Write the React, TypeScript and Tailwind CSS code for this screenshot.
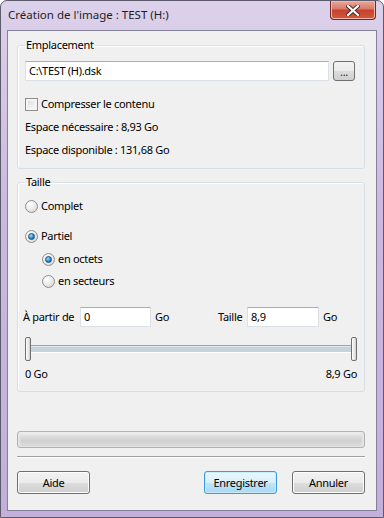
import React from "react";

const font = { fontFamily: '"Noto Sans", "Segoe UI", Tahoma, sans-serif' };

function Radio({ checked, label }: { checked?: boolean; label: string }) {
  return (
    <div className="flex items-center h-[16px]">
      <span className="relative flex items-center justify-center w-[13px] h-[13px] rounded-full border border-[#8e8f8f] bg-[radial-gradient(circle_at_35%_30%,#ffffff_0%,#e6e6e6_60%,#c9c9c9_100%)]">
        {checked && (
          <span className="w-[7px] h-[7px] rounded-full border border-[#1c4c7a] bg-[radial-gradient(circle_at_35%_30%,#9ee3ff_0%,#2a8fd4_55%,#0f4f8a_100%)]" />
        )}
      </span>
      <span className="ml-[3px] text-[#000]">{label}</span>
    </div>
  );
}

function Button({ label, primary }: { label: string; primary?: boolean }) {
  return (
    <button
      className={
        "w-[73px] h-[23px] rounded-[3px] border text-[11px] leading-none " +
        (primary
          ? "border-[#3c9ad8] bg-[linear-gradient(#eaf6fd_0%,#d9f0fc_50%,#bee6fd_51%,#a7d9f5_100%)] shadow-[inset_0_0_0_1px_#c9ecfd]"
          : "border-[#707070] bg-[linear-gradient(#f2f2f2_0%,#ebebeb_50%,#dddddd_51%,#cfcfcf_100%)] shadow-[inset_0_0_0_1px_#fcfcfc]")
      }
    >
      {label}
    </button>
  );
}

function TextBox({ value, className }: { value: string; className: string }) {
  return (
    <div
      className={
        "h-[20px] bg-white border border-[#dbdfe6] border-t-[#abadb3] flex items-center pl-[3px] " +
        className
      }
    >
      {value}
    </div>
  );
}

export default function App() {
  return (
    <div
      style={font}
      className="w-[384px] h-[518px] text-[11px] tracking-[-0.3px] leading-[16px] text-black rounded-t-[7px] border border-[#5d5a6b] bg-[linear-gradient(180deg,#dcd1ea_0%,#cbb9df_40%,#c3b0da_100%)] flex flex-col"
    >
      {/* title bar */}
      <div className="h-[29px] flex items-start shrink-0">
        <div className="pl-[7px] pt-[6px] text-[11.5px] tracking-normal text-[#1e1e1e]">
          Création de l&apos;image : TEST (H:)
        </div>
        <div className="ml-auto mr-[7px] w-[46px] h-[19px] rounded-b-[4px] border border-t-0 border-[#6e2a22] bg-[linear-gradient(180deg,#e9a99b_0%,#d8776a_45%,#c7402e_50%,#d05a3e_100%)] shadow-[inset_0_0_0_1px_#f2b8aa] flex items-center justify-center">
          <svg width="14" height="11" viewBox="0 0 14 11">
            <path
              d="M2 1 L12 10 M12 1 L2 10"
              stroke="#3b2a2a"
              strokeWidth="4"
              strokeLinecap="square"
            />
            <path
              d="M2 1 L12 10 M12 1 L2 10"
              stroke="#ffffff"
              strokeWidth="2.2"
              strokeLinecap="square"
            />
          </svg>
        </div>
      </div>

      {/* client area */}
      <div className="mx-[6px] h-[481px] border border-[#84829a] bg-[#f0f0f0] flex flex-col pl-[9px]">
        <fieldset className="mt-[6px] w-[348px] rounded-[3px] border border-[#d5dfe5] shadow-[inset_1px_1px_0_#ffffff] px-[7px] pb-[10px]">
          <legend className="px-[1px] h-[16px]">Emplacement</legend>
          <div className="mt-[8px] flex items-center">
            <TextBox value="C:\TEST (H).dsk" className="w-[304px]" />
            <div className="ml-[4px] w-[22px] h-[20px] rounded-[3px] border border-[#707070] bg-[linear-gradient(#f2f2f2_0%,#ebebeb_50%,#dddddd_51%,#cfcfcf_100%)] flex items-center justify-center text-[11px] leading-none text-[#1a1a60]">
              ...
            </div>
          </div>
          <div className="mt-[15px] flex items-center h-[16px]">
            <span className="w-[13px] h-[13px] border border-[#8f8f8f] bg-[linear-gradient(135deg,#d9d9d9_0%,#f0f0f0_60%,#ffffff_100%)] shadow-[inset_0_0_0_2px_#f4f4f4]" />
            <span className="ml-[3px]">Compresser le contenu</span>
          </div>
          <div className="mt-[7px]">Espace nécessaire : 8,93 Go</div>
          <div className="mt-[7px]">Espace disponible : 131,68 Go</div>
        </fieldset>

        <fieldset className="mt-[5px] w-[348px] rounded-[3px] border border-[#d5dfe5] shadow-[inset_1px_1px_0_#ffffff] px-[7px] pb-[9px]">
          <legend className="px-[1px] h-[16px]">Taille</legend>
          <div className="mt-[8px]">
            <Radio label="Complet" />
          </div>
          <div className="mt-[14px]">
            <Radio checked label="Partiel" />
          </div>
          <div className="mt-[7px] pl-[17px] flex flex-col gap-[6px]">
            <Radio checked label="en octets" />
            <Radio label="en secteurs" />
          </div>
          <div className="mt-[18px] flex items-center -ml-[2px]">
            <span className="w-[57px]">À partir de</span>
            <TextBox value="0" className="w-[71px]" />
            <span className="ml-[4px] w-[63px]">Go</span>
            <span className="w-[29px]">Taille</span>
            <TextBox value="8,9" className="w-[72px]" />
            <span className="ml-[4px]">Go</span>
          </div>
          {/* slider */}
          <div className="mt-[10px] flex items-center h-[24px]">
            <span className="w-[6px] h-[24px] rounded-[2px] border border-[#707070] bg-[linear-gradient(90deg,#ffffff_0%,#e6e6e6_60%,#cfcfcf_100%)]" />
            <div className="flex-1 h-[8px] border-t border-[#a3a3a3] border-b border-b-[#ffffff] bg-[#c6d3df] shadow-[inset_0_1px_0_#e3e9ef]" />
            <span className="w-[6px] h-[24px] rounded-[2px] border border-[#707070] bg-[linear-gradient(90deg,#ffffff_0%,#e6e6e6_60%,#cfcfcf_100%)]" />
          </div>
          <div className="mt-[5px] flex justify-between">
            <span>0 Go</span>
            <span>8,9 Go</span>
          </div>
        </fieldset>

        {/* progress bar */}
        <div className="mt-[39px] w-[348px] h-[17px] rounded-[3px] border border-[#b2b2b2] bg-[linear-gradient(180deg,#f3f3f3_0%,#dcdcdc_30%,#d0d0d0_60%,#dedede_100%)] shadow-[inset_2px_0_2px_#e6e6e6,inset_-2px_0_2px_#e6e6e6]" />

        <div className="mt-[8px] w-[348px] h-[2px] border-t border-[#a0a0a0] border-b border-b-[#ffffff]" />

        <div className="mt-[13px] w-[348px] flex items-center">
          <Button label="Aide" />
          <div className="ml-auto flex gap-[15px]">
            <Button label="Enregistrer" primary />
            <Button label="Annuler" />
          </div>
        </div>
      </div>
    </div>
  );
}
